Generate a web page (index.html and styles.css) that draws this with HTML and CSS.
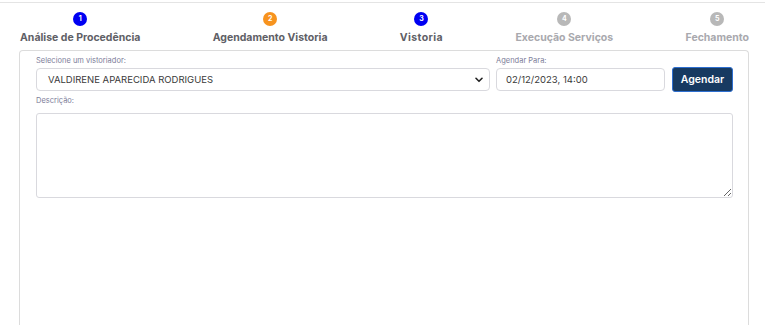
FILE: index.html
```html
<!DOCTYPE html>
<html lang="pt-BR">
<head>
<meta charset="utf-8">
<link rel="stylesheet" href="styles.css">
</head>
<body>
<div class="topline"></div>
<div class="steps">
  <div class="step"><span class="dot dot-blue">1</span><span class="label">Análise de Procedência</span></div>
  <div class="step"><span class="dot dot-orange">2</span><span class="label">Agendamento Vistoria</span></div>
  <div class="step"><span class="dot dot-blue">3</span><span class="label label-wide">Vistoria</span></div>
  <div class="step"><span class="dot dot-gray">4</span><span class="label label-muted">Execução Serviços</span></div>
  <div class="step"><span class="dot dot-gray">5</span><span class="label label-muted">Fechamento</span></div>
</div>
<div class="card">
  <div class="row">
    <div class="field field-select">
      <label class="small-label">Selecione um vistoriador:</label>
      <div class="control select">
        <span>VALDIRENE APARECIDA RODRIGUES</span>
        <svg class="chev" width="8" height="6" viewBox="0 0 8 6"><path d="M1 1.3 L4 4.3 L7 1.3" fill="none" stroke="#222" stroke-width="1.6" stroke-linecap="round" stroke-linejoin="round"/></svg>
      </div>
    </div>
    <div class="field field-date">
      <label class="small-label">Agendar Para:</label>
      <input class="control date" type="text" value="02/12/2023, 14:00">
    </div>
    <button class="btn">Agendar</button>
  </div>
  <label class="small-label desc-label">Descrição:</label>
  <textarea class="textarea"></textarea>
</div>
</body>
</html>
```
FILE: styles.css
```css
* { box-sizing: border-box; }
html, body { margin: 0; padding: 0; background: #fff; overflow: hidden; }
body {
  font-family: "Inter", "Noto Sans", sans-serif;
  color: #333;
  width: 767px;
  height: 325px;
}
.topline {
  margin-top: 2px;
  height: 1px;
  background: #e4e4e4;
  width: 765px;
}
.steps {
  display: flex;
  justify-content: space-between;
  padding: 9px 18px 0 20px;
  height: 47px;
}
.step {
  display: flex;
  flex-direction: column;
  align-items: center;
}
.dot {
  width: 14px;
  height: 14px;
  border-radius: 50%;
  color: #fff;
  font-size: 7px;
  font-weight: 700;
  line-height: 14px;
  text-align: center;
}
.dot-blue { background: #0000f2; }
.dot-orange { background: #f7931e; }
.dot-gray { background: #b8b8b8; }
.label {
  margin-top: 5px;
  font-size: 10.5px;
  font-weight: 700;
  color: #606066;
  white-space: nowrap;
}
.label-wide { letter-spacing: 0.4px; }
.label-muted { color: #a9a9ae; }
.card {
  margin: 0 18px 0 19px;
  height: 290px;
  border: 1px solid #dcdcdc;
  border-bottom: none;
  border-radius: 4px 4px 0 0;
  padding: 4px 14px 0 16px;
}
.row {
  display: flex;
  align-items: flex-end;
}
.field { display: flex; flex-direction: column; }
.field-select { width: 454px; }
.field-date { width: 169px; margin-left: 6px; }
.small-label {
  font-size: 7.5px;
  color: #7d7d99;
  line-height: 12px;
  height: 13px;
}
.control {
  height: 23px;
  border: 1px solid #d9d9de;
  border-radius: 4px;
  font-family: inherit;
  font-size: 9.5px;
  color: #3a3a3a;
  background: #fff;
}
.select {
  display: flex;
  align-items: center;
  justify-content: space-between;
  padding: 0 6px 0 11px;
}
.chev { display: block; }
.date {
  padding: 0 9px;
  outline: none;
}
.btn {
  margin-left: 7px;
  width: 61px;
  height: 25px;
  margin-bottom: -0.5px;
  background: #173a61;
  color: #fff;
  border: 1px solid #2e6fd0;
  border-radius: 3px;
  font-family: inherit;
  font-size: 10.5px;
  font-weight: 600;
  padding: 0;
}
.desc-label {
  display: block;
  margin-top: 5px;
  height: 17px;
  line-height: 10px;
}
.textarea {
  display: block;
  width: 697px;
  height: 85px;
  border: 1px solid #d9d9de;
  border-radius: 3px;
  resize: both;
  font-family: inherit;
  margin: 0;
}
```
